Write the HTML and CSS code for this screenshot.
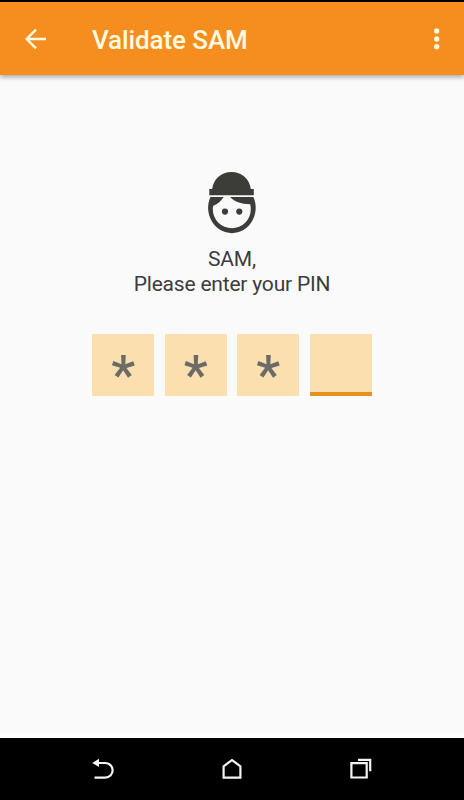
FILE: index.html
```html
<!DOCTYPE html>
<html lang="en">
<head>
    <meta charset="UTF-8">
    <meta name="viewport" content="width=device-width, initial-scale=1.0">
    <title>Validate SAM</title>
    <link rel="stylesheet" href="styles.css">
</head>
<body>
    <header class="toolbar">
        <button class="icon-button back" aria-label="Back">
            <svg width="22" height="22" viewBox="0 0 22 22">
                <path d="M21 11H2.500M11 1.700L1.700 11l9.300 9.300" fill="none" stroke="currentColor" stroke-width="2.400"/>
            </svg>
        </button>
        <h1>Validate SAM</h1>
        <button class="icon-button more" aria-label="More options">
            <svg width="6" height="22" viewBox="0 0 6 22">
                <circle cx="2.700" cy="3" r="2.650"/>
                <circle cx="2.700" cy="11" r="2.650"/>
                <circle cx="2.700" cy="18.700" r="2.650"/>
            </svg>
        </button>
    </header>

    <main class="content">
        <svg class="avatar" width="50" height="64" viewBox="0 0 50 64">
            <!-- hat -->
            <path d="M2.300 25.200V19h2.900C6.200 9 14.500 2 24.500 2s18.300 7 19.300 17h3v6.200z"/>
            <!-- head and fringe -->
            <path d="M3.400 27h43a23.800 25.300 0 1 1-43 0z"/>
            <path class="face" d="M16.500 26.500h6C27 31.500 34 34.200 43.200 34.200c.4 1.600.6 3.300.6 5a19 19 0 0 1-38 0c0-1.200.2-2.400.5-3.500C10.500 34 14.500 31 16.500 27z"/>
            <circle cx="18" cy="41.600" r="3.100"/>
            <circle cx="32.300" cy="41.600" r="3.100"/>
        </svg>
        <p class="prompt">SAM,<br>Please enter your PIN</p>
        <div class="pin">
            <div class="pin-digit">*</div>
            <div class="pin-digit">*</div>
            <div class="pin-digit">*</div>
            <div class="pin-digit active"></div>
        </div>
    </main>

    <nav class="nav-bar">
        <svg width="24" height="22" viewBox="0 0 24 22">
            <path d="M6 5h8.300a7.300 7.300 0 0 1 0 14.700H3.500"/>
            <path class="solid" d="M1.200 4.900L8 .700v8.400z"/>
        </svg>
        <svg width="22" height="22" viewBox="0 0 22 22">
            <path d="M2.600 8.300L11 2l8.400 6.300v11.300H2.600z"/>
        </svg>
        <svg width="24" height="22" viewBox="0 0 24 22">
            <path d="M2.400 5.200h15.300v14.300H2.400zM9 1.900h12.200v11.400"/>
        </svg>
    </nav>
</body>
</html>
```

FILE: styles.css
```css
* {
    margin: 0;
    padding: 0;
    box-sizing: border-box;
}

body {
    font-family: Roboto, "Liberation Sans", sans-serif;
    background: #fafafa;
    height: 100vh;
    display: flex;
    flex-direction: column;
}

.toolbar {
    height: 75px;
    flex-shrink: 0;
    display: flex;
    align-items: center;
    padding: 0 24px 0 25px;
    border-top: 2px solid #000;
    background: #f58e1e;
    color: #fffbe2;
    box-shadow: 0 2px 5px rgba(0, 0, 0, 0.35);
}

.toolbar h1 {
    flex: 1;
    margin-left: 45px;
    padding-top: 2px;
    font-size: 26px;
    font-weight: 500;
    line-height: 30px;
    letter-spacing: -0.1px;
}

.icon-button {
    display: flex;
    border: none;
    background: none;
    color: inherit;
    cursor: pointer;
}

.icon-button svg {
    fill: currentColor;
}

.content {
    flex: 1;
    display: flex;
    flex-direction: column;
    align-items: center;
    padding-top: 95px;
    border-bottom: 5px solid #fdfdfd;
}

.avatar {
    fill: #3c3c38;
}

.avatar .face {
    fill: #fafafa;
}

.prompt {
    margin-top: 13px;
    font-size: 21px;
    line-height: 25px;
    letter-spacing: -0.2px;
    text-align: center;
    color: #3c3c3c;
}

.pin {
    display: flex;
    gap: 10.5px;
    margin-top: 37px;
}

.pin-digit {
    width: 62px;
    height: 62px;
    padding-top: 20px;
    background: #fbdfae;
    color: #6b6b67;
    font-size: 54px;
    font-weight: 500;
    line-height: 42px;
    text-align: center;
}

.pin-digit.active {
    border-bottom: 4px solid #e59320;
}

.nav-bar {
    height: 62px;
    flex-shrink: 0;
    display: flex;
    justify-content: space-between;
    align-items: center;
    padding: 0 91px;
    background: #000;
}

.nav-bar path {
    fill: none;
    stroke: #f4f4f4;
    stroke-width: 2.2;
}

.nav-bar .solid {
    fill: #f4f4f4;
    stroke: none;
}
```
